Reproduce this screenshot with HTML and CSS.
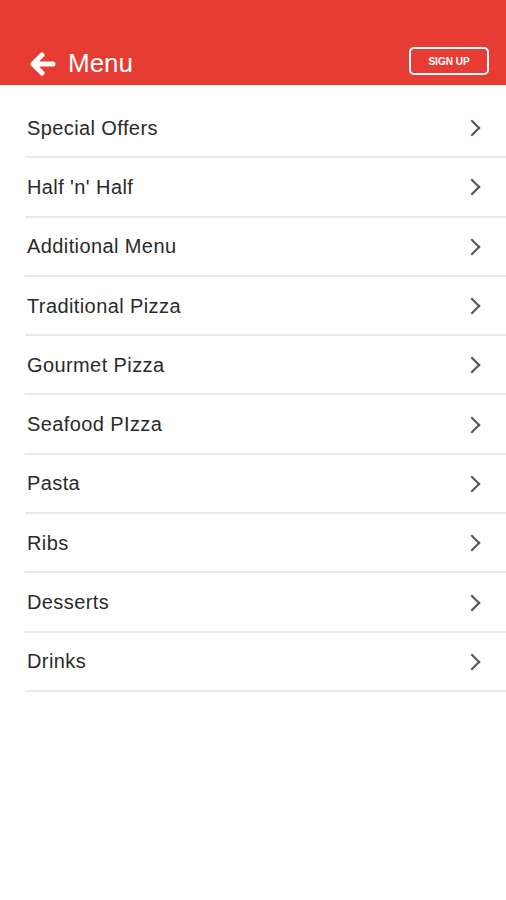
FILE: index.html
```html
<!DOCTYPE html>
<html lang="en">
<head>
  <meta charset="UTF-8" />
  <meta name="viewport" content="width=device-width, initial-scale=1" />
  <title>Menu</title>
  <link rel="stylesheet" href="styles.css">
</head>
<body>

<header class="topbar">
  <div class="title">
    <svg class="back" width="26" height="24" viewBox="0 0 26 24">
      <path d="M12 3 L3 12 L12 21 M4 12 H23" fill="none" stroke="#fff" stroke-width="5" stroke-linecap="round" stroke-linejoin="round"/>
    </svg>
    <span>Menu</span>
  </div>
  <a class="signup" href="#">SIGN UP</a>
</header>

<ul class="menu">
  <li><span>Special Offers</span><i class="chev"></i></li>
  <li><span>Half 'n' Half</span><i class="chev"></i></li>
  <li><span>Additional Menu</span><i class="chev"></i></li>
  <li><span>Traditional Pizza</span><i class="chev"></i></li>
  <li><span>Gourmet Pizza</span><i class="chev"></i></li>
  <li><span>Seafood PIzza</span><i class="chev"></i></li>
  <li><span>Pasta</span><i class="chev"></i></li>
  <li><span>Ribs</span><i class="chev"></i></li>
  <li><span>Desserts</span><i class="chev"></i></li>
  <li><span>Drinks</span><i class="chev"></i></li>
</ul>

</body>
</html>
```

FILE: styles.css
```css
body {
  margin: 0;
  font-family: 'Liberation Sans', Arial, sans-serif;
  background: #fff;
}
.topbar {
  background: #e63c33;
  height: 85px;
  box-sizing: border-box;
  padding: 46px 17px 0 30px;
  display: flex;
  justify-content: space-between;
  align-items: flex-start;
}
.title {
  display: flex;
  align-items: center;
  gap: 12px;
  color: white;
  font-size: 26px;
  margin-top: 2px;
}
.back {
  display: block;
}
.signup {
  color: white;
  text-decoration: none;
  border: 2px solid white;
  border-radius: 5px;
  width: 80px;
  height: 28px;
  box-sizing: border-box;
  display: flex;
  align-items: center;
  justify-content: center;
  font-size: 10px;
  font-weight: bold;
  margin-top: 1px;
}
.menu {
  list-style: none;
  margin: 14px 0 0 25px;
  padding: 0;
}
.menu li {
  height: 59.3px;
  box-sizing: border-box;
  border-bottom: 2px solid #e8e8e8;
  display: flex;
  align-items: center;
  justify-content: space-between;
  padding: 1px 28px 0 2px;
  font-size: 20px;
  letter-spacing: 0.4px;
  color: #2a2a2a;
}
.chev {
  width: 10px;
  height: 10px;
  border-right: 2px solid #555;
  border-top: 2px solid #555;
  transform: rotate(45deg);
}
```
